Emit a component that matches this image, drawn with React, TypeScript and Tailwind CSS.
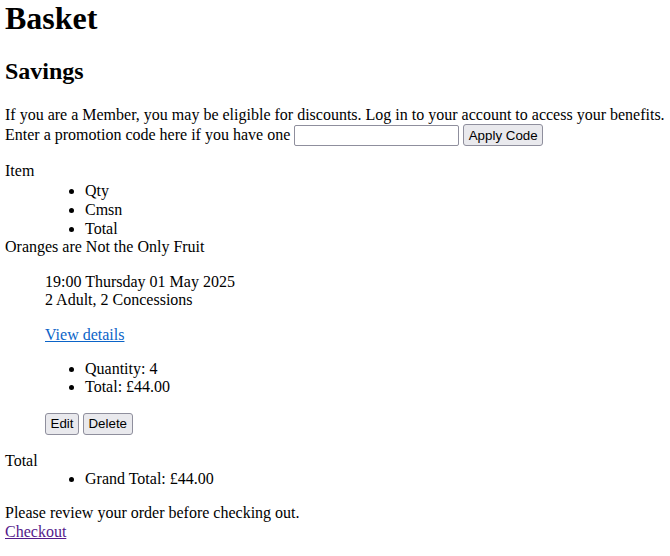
export default function App() {
  const btn =
    "h-[22px] rounded-[3px] border border-[#8f8f9d] bg-[#e9e9ed] px-[4.5px] font-['Liberation_Sans',Arial,sans-serif] text-[13.33px] leading-[normal] text-black align-baseline";

  return (
    <div className="px-[5px] font-['Liberation_Serif','Times_New_Roman',serif] text-[16px] leading-[18.4px] text-black bg-white min-h-[556px]">
      <h1 className="mb-[21.44px] text-[32px] font-bold leading-[36.8px]">Basket</h1>
      <h2 className="my-[19.92px] text-[24px] font-bold leading-[27.6px]">Savings</h2>

      <p className="mb-4">
        If you are a Member, you may be eligible for discounts. Log in to your account to access your benefits.
        <br />
        Enter a promotion code here if you have one{' '}
        <input
          type="text"
          className="h-[21px] w-[165px] rounded-[2px] border border-[#8f8f9d] bg-white px-[2px] align-baseline font-['Liberation_Sans',Arial,sans-serif] text-[13.33px]"
        />{' '}
        <button type="button" className={btn}>
          Apply Code
        </button>
      </p>

      <dl>
        <dt>Item</dt>
        <dd className="ml-10">
          <ul className="list-disc pl-10 leading-[19.3px]">
            <li>Qty</li>
            <li>Cmsn</li>
            <li>Total</li>
          </ul>
        </dd>

        <dt>Oranges are Not the Only Fruit</dt>
        <dd className="ml-10">
          <p className="my-4">
            19:00 Thursday 01 May 2025
            <br />
            2 Adult, 2 Concessions
          </p>
          <p className="my-4">
            <a href="#" className="text-[#0b64c8] underline">
              View details
            </a>
          </p>
          <ul className="my-4 list-disc pl-10">
            <li>Quantity: 4</li>
            <li>Total: £44.00</li>
          </ul>
          <div className="my-4 flex gap-[4px]">
            <button type="button" className={btn}>
              Edit
            </button>
            <button type="button" className={btn}>
              Delete
            </button>
          </div>
        </dd>

        <dt className="leading-[19px]">Total</dt>
        <dd className="ml-10">
          <ul className="list-disc pl-10">
            <li>Grand Total: £44.00</li>
          </ul>
        </dd>
      </dl>

      <p className="mt-4">
        Please review your order before checking out.
        <br />
        <a href="#" className="text-[#551a8b] underline">
          Checkout
        </a>
      </p>
    </div>
  );
}
